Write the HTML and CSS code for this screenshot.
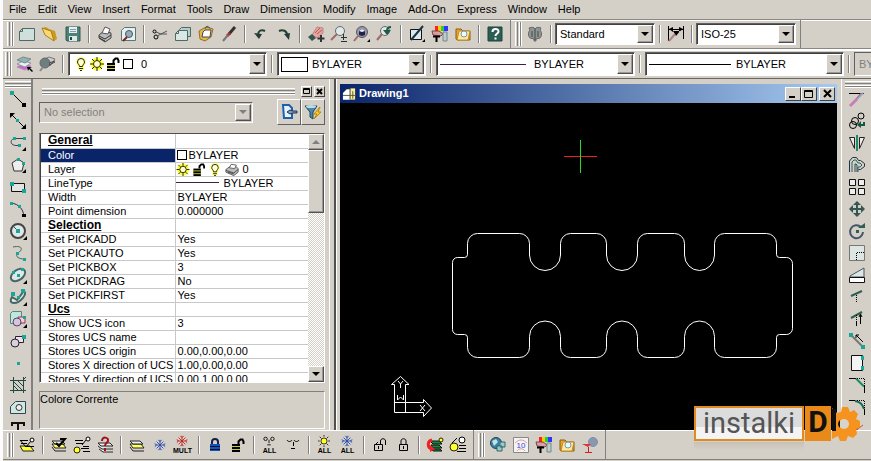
FILE: index.html
```html
<!DOCTYPE html>
<html lang="en">
<head>
<meta charset="utf-8">
<title>Drawing1</title>
<link rel="stylesheet" href="styles.css">
</head>
<body>
<svg class="defs" aria-hidden="true">
  <symbol id="bulb" viewBox="0 0 14 14"><path d="M7 0a5 5 0 0 0-5 5c0 2 2 3 2 5v3h6v-3c0-2 2-3 2-5a5 5 0 0 0-5-5z" fill="#ff6"/><path d="M5.500 9.500c0-2-2-2.500-2-4.500a3.500 3.500 0 0 1 7 0c0 2-2 2.500-2 4.500zM5 11.500h4M6 13.500h2" fill="#ffc" stroke="#222"/></symbol>
  <symbol id="sun" viewBox="0 0 14 14"><circle cx="7" cy="7" r="6.500" fill="#ff3"/><circle cx="7" cy="7" r="3.500" fill="#ffc" stroke="#220"/><path d="M7 0v3M7 11v3M0 7h3M11 7h3M2 2l2 2M10 10l2 2M2 12l2-2M10 4l2-2" stroke="#220"/></symbol>
  <symbol id="unlock" viewBox="0 0 14 14"><path d="M1 6h8v8H1z" fill="#000"/><path d="M1 8.500h8M1 11.500h8" stroke="#cc3"/><path d="M7.500 6V3.500l2-2h2l1 2V6" fill="none" stroke="#000" stroke-width="2"/></symbol>
  <symbol id="printer" viewBox="0 0 16 14"><path d="M1 7l4-3h8l2 2v4l-5 4-9-4z" fill="#bbb" stroke="#555"/><path d="M5 5l2-4 6 1-2 4z" fill="#fff" stroke="#555"/><path d="M1 8l9 3 5-4M3 10l7 2" fill="none" stroke="#444"/></symbol>
  <symbol id="sheets" viewBox="0 0 18 18"><path d="M2 8h11l3 4H5z" fill="#ff6" stroke="#222"/><path d="M2 5h10l3 3H5z" fill="#eee" stroke="#222"/><path d="M2 11l3 4h11" fill="none" stroke="#222"/></symbol>
  <symbol id="flake" viewBox="0 0 14 14"><path d="M7 1v12M1 7h12M3 3l8 8M11 3l-8 8M5 1l2 2 2-2M5 13l2-2 2 2M1 5l2 2-2 2M13 5l-2 2 2 2" fill="none" stroke="currentColor"/></symbol>
  <symbol id="folder" viewBox="0 0 18 18"><path d="M2 14V4h5l2 2h7v9H3z" fill="#e9a52c" stroke="#8a5a10"/><path d="M5 6h11l-2 9H3z" fill="#ffe9a0" stroke="#c58a20"/><circle cx="10" cy="9" r="3" fill="#e8fbff" stroke="#79a"/></symbol>
  <symbol id="palette" viewBox="0 0 18 18"><path d="M4 1h3v5H4z" fill="#f22"/><path d="M7 1h3v5H7z" fill="#fc0"/><path d="M10 1h3v5h-3z" fill="#2c4"/><path d="M13 1h4v5h-4z" fill="#33f"/><path d="M1 6h7l4 3-2 2-8-1z" fill="#d9a0a0" stroke="#744"/><path d="M12 7h4v9h-4z" fill="#bcc" stroke="#788"/><path d="M2 11.500h7M5.500 11v6" stroke="#000" stroke-width="2"/></symbol>
</svg>

<nav class="menu">
  <a href="#">File</a><a href="#">Edit</a><a href="#">View</a><a href="#">Insert</a><a href="#">Format</a><a href="#">Tools</a><a href="#">Draw</a><a href="#">Dimension</a><a href="#">Modify</a><a href="#">Image</a><a href="#">Add-On</a><a href="#">Express</a><a href="#">Window</a><a href="#">Help</a>
</nav>

<div class="bar bar-std">
  <div class="group">
    <span class="grip"></span>
    <button aria-label="New"><svg viewBox="0 0 18 18"><path d="M1.500 15.500V6.500l3-3h12v12z" fill="#cfe0dc" stroke="#4b6b66"/><path d="M1.500 6.500h3v-3" fill="none" stroke="#4b6b66"/></svg></button>
    <button aria-label="Open"><svg viewBox="0 0 18 18"><path d="M1 3l4-1 3 2 6 2 2 8-3 2z" fill="#c99a20"/><path d="M1 3l9 3 3 10-9-6z" fill="#f7d873" stroke="#a8811c"/></svg></button>
    <button aria-label="Save"><svg viewBox="0 0 18 18"><path d="M2 2h14v14H3l-1-1z" fill="#4d8076" stroke="#2e5b52"/><path d="M5 2h8v6H5z" fill="#e6f0ee"/><path d="M6 4.500h6M6 6.500h6" stroke="#89a"/><path d="M5 11h8v5H5z" fill="#dfe8e6"/><path d="M6 12h2v3H6z" fill="#245"/></svg></button>
    <span class="sep"></span>
    <button aria-label="Print"><svg viewBox="0 0 18 18"><path d="M3 10l5-4 7 2v5l-6 4-6-4z" fill="#bbb" stroke="#444"/><path d="M6 8l3-6 5 2-2 5z" fill="#fff" stroke="#555"/><path d="M3 11l6 3 6-4M3 13l6 3" fill="none" stroke="#333"/></svg></button>
    <button aria-label="Print preview"><svg viewBox="0 0 18 18"><path d="M2.500 15.500V5.500l3-3h11v13z" fill="#e6f0ee" stroke="#577"/><circle cx="10" cy="9" r="3.500" fill="#9ab" stroke="#456"/><path d="M8 12l-4 4" stroke="#722" stroke-width="2"/></svg></button>
    <span class="sep"></span>
    <button aria-label="Cut"><svg viewBox="0 0 18 18"><circle cx="3.500" cy="6.500" r="1.500" class="k"/><circle cx="5" cy="12" r="2" class="k"/><path d="M5 7l5 2h6M6 11l4-2 6-3" fill="none" stroke="#555"/></svg></button>
    <button aria-label="Copy"><svg viewBox="0 0 18 18"><path d="M5.500 11.500V4.500l2-2h9v9z" fill="#b8ccc8" stroke="#4b6b66"/><path d="M1.500 15.500V8.500l3-3h9v10z" fill="#d9e8e4" stroke="#4b6b66"/><path d="M1.500 8.500h3v-3" fill="none" stroke="#4b6b66"/></svg></button>
    <button aria-label="Paste"><svg viewBox="0 0 18 18"><path d="M2 6l7-4 7 2-2 8-6 4-5-2z" fill="#e3b94e" stroke="#93711f"/><path d="M6 7l2-2h6l-1 7H5z" fill="#fff" stroke="#445"/><path d="M8 4l2-3 3 2" fill="none" stroke="#555"/></svg></button>
    <button aria-label="Match properties"><svg viewBox="0 0 18 18"><path d="M15 2l-6 7" stroke="#333" stroke-width="3"/><path d="M10 8l-3 3" stroke="#a33" stroke-width="3"/><path d="M8 10l-5 6" stroke="#777" stroke-width="2"/></svg></button>
    <span class="sep"></span>
    <button aria-label="Undo"><svg viewBox="0 0 18 18"><path d="M13 6c-4-2-7 0-7 4" fill="none" stroke="#243d38" stroke-width="2"/><path d="M2 8l8 1-3 5z" fill="#243d38"/></svg></button>
    <button aria-label="Redo"><svg viewBox="0 0 18 18"><path d="M4 6c4-2 8 0 8 4" fill="none" stroke="#243d38" stroke-width="2"/><path d="M9 9l6-1-1 7z" fill="#243d38"/></svg></button>
    <span class="sep"></span>
    <button aria-label="Pan"><svg viewBox="0 0 18 18"><path d="M5 10l5-8 6 1v5l-6 5z" fill="#e9a4a0" stroke="#c08480"/><path d="M8 8l5-5M10 9l5-4" stroke="#a8605c"/><path d="M1 12l4-3 4 4-4 3z" fill="#35574f"/><path d="M14 10v7M10.500 13.500h7" stroke="#333" stroke-width="2"/></svg></button>
    <button aria-label="Zoom realtime"><svg viewBox="0 0 18 18"><circle cx="10" cy="6" r="4.500" fill="#dfe9e6" stroke="#667"/><path d="M7 9l-6 6" stroke="#a0696a" stroke-width="2"/><path d="M13.500 9v6M11 12.500h6M11 16.500h6" stroke="#233"/></svg></button>
    <button aria-label="Zoom window"><svg viewBox="0 0 18 18"><circle cx="9" cy="7" r="5.500" fill="#99a" stroke="#556"/><path d="M6 6l3-2 3 2v4l-3 1-3-1z" fill="#224"/><path d="M6 6l3-2 3 2-3 1z" fill="#eef"/><path d="M5 11l-4 5" stroke="#a0696a" stroke-width="2"/><path d="M17 14v3h-3z"/></svg></button>
    <button aria-label="Zoom previous"><svg viewBox="0 0 18 18"><circle cx="9" cy="6" r="4.500" fill="#dfe9e6" stroke="#667"/><path d="M6 9l-5 6" stroke="#a0696a" stroke-width="2"/><path d="M15 2c-3 0-4 2-4 4" fill="none" stroke="#1e5a48" stroke-width="2"/><path d="M7 5h8l-4 5z" fill="#1e5a48"/></svg></button>
    <span class="sep"></span>
    <button aria-label="Redraw"><svg viewBox="0 0 18 18"><path d="M2.500 4.500h11v10h-11z" fill="#dce8ee" stroke="#111"/><path d="M15 1L3 15" stroke="#16353e" stroke-width="2"/><path d="M17 14v3h-3z"/></svg></button>
    <button aria-label="Properties"><svg><use href="#palette"/></svg></button>
    <button aria-label="Explorer"><svg><use href="#folder"/></svg></button>
    <span class="sep"></span>
    <button aria-label="Help"><svg viewBox="0 0 18 18"><path d="M2 2h14v14H2z" fill="#2d5e53" stroke="#17443a"/><path d="M6.500 7c0-4 6-4 6-.5 0 2-3 2-3 4.500M9.500 12.500v2" fill="none" stroke="#fff" stroke-width="2"/></svg></button>
  </div>
  <div class="group">
    <span class="grip"></span>
    <button aria-label="Text style"><svg viewBox="0 0 18 18"><path d="M3 3c3-1 5-1 6 1 1-2 4-2 6-1l-1 2c2 2 2 6 0 8l-4 1v2H8v-2l-4-1c-2-2-2-6 0-8z" fill="#8d9694" stroke="#666"/><path d="M6 6v6M9 4v11M12 6v6" stroke="#444"/></svg></button>
    <span class="sep"></span>
    <label class="combo w100"><select aria-label="Text style"><option>Standard</option></select><i class="arrow"></i></label>
    <span class="sep"></span>
    <button aria-label="Dimension style"><svg viewBox="0 0 18 18"><path d="M1.500 1v15M16.500 1v13M2 4.500h14" class="k"/><path d="M2 4l4-2v5zM16 4l-4-2v5zM6 6h7l-4 5z"/><path d="M8 9l-6 7" stroke="#b08080" stroke-width="2"/></svg></button>
    <span class="sep"></span>
    <label class="combo w100"><select aria-label="Dimension style"><option>ISO-25</option></select><i class="arrow"></i></label>
  </div>
</div>

<div class="bar bar-obj">
  <span class="grip"></span>
  <button aria-label="Layer manager"><svg viewBox="0 0 18 18"><path d="M2 12l6-3 8 2-6 4z" fill="#c86ac0" stroke="#c080c0"/><path d="M2 9l6-3 8 2-6 4z" fill="#eee" stroke="#89a"/><path d="M2 5l6-3 8 2-6 4z" fill="#8fb5aa" stroke="#789"/><path d="M12 12h5l-2 1 3 3-1 1-3-3-1 2z"/></svg></button>
  <button aria-label="Layer states"><svg viewBox="0 0 18 18"><path d="M5 5l6-3 6 2-5 7z" fill="#ccc" stroke="#777"/><circle cx="7" cy="8" r="5" fill="#6f7f7c" stroke="#667"/><path d="M11 8l6-2M11 10l6-3" stroke="#444"/><path d="M5 12l-3 4" stroke="#888" stroke-width="2"/></svg></button>
  <span class="sep"></span>
  <label class="combo w200"><svg class="m"><use href="#bulb"/></svg><svg class="m"><use href="#sun"/></svg><svg class="m"><use href="#unlock"/></svg><i class="swatch"></i><select aria-label="Layer"><option>0</option></select><i class="arrow"></i></label>
  <span class="sep"></span>
  <label class="combo w150"><i class="swatch wide"></i><select aria-label="Color"><option>BYLAYER</option></select><i class="arrow"></i></label>
  <span class="sep"></span>
  <label class="combo w200"><i class="line"></i><select aria-label="Linetype"><option>BYLAYER</option></select><i class="arrow"></i></label>
  <span class="sep"></span>
  <label class="combo w200"><i class="line black"></i><select aria-label="Lineweight"><option>BYLAYER</option></select><i class="arrow"></i></label>
  <span class="sep"></span>
  <label class="combo w200 off"><select aria-label="Plot style" disabled><option>BYLAYER</option></select><i class="arrow"></i></label>
</div>

<main class="middle">
  <div class="side left">
    <span class="hgrip"></span>
    <button aria-label="Line"><svg viewBox="0 0 18 18"><path d="M3 3l12 12" class="k"/><path d="M1 1h4v4H1z" class="t"/><path d="M13 13h4v4h-4z"/></svg></button>
    <button aria-label="Ray"><svg viewBox="0 0 18 18"><path d="M3 3l12 12" class="k"/><path d="M1 1h5L1 6zM17 17h-5l5-5z"/><path d="M7 7h3v3H7z" class="t"/></svg></button>
    <button aria-label="Polyline"><svg viewBox="0 0 18 18"><path d="M5 4.500h10M5 4.500c-5 2-3 7 2 7h3" fill="none" stroke="#345"/><path d="M4 3h3v3H4zM14 3h3v3h-3zM9 10h3v3H9z" class="t"/><path d="M17 13v4h-4z"/></svg></button>
    <button aria-label="Polygon"><svg viewBox="0 0 18 18"><path d="M9 3l6 4-2 8H5L3 7z" fill="#eee" stroke="#333"/><path d="M8 2h3v3H8zM13 6h3v3h-3z" class="t"/><path d="M17 13v4h-4z"/></svg></button>
    <button aria-label="Rectangle"><svg viewBox="0 0 18 18"><path d="M2.500 5.500h13v8h-13z" fill="#e4e4e4" stroke="#111"/><path d="M1 4h4v4H1zM13 11h4v4h-4z" class="t"/></svg></button>
    <button aria-label="Arc"><svg viewBox="0 0 18 18"><path d="M2 3c8 1 12 6 13 13" fill="none" stroke="#234"/><path d="M1 2h3v3H1zM9 5h3v3H9z" class="t"/><path d="M13 14h4v3h-4z"/></svg></button>
    <button aria-label="Circle"><svg viewBox="0 0 18 18"><circle cx="9" cy="9" r="7" fill="#dfe8e6" stroke="#444" stroke-width="2"/><path d="M4 4l5 5" stroke="#166"/><path d="M7 7h4v4H7z" class="t"/><path d="M18 14v4h-4z"/></svg></button>
    <button aria-label="Spline"><svg viewBox="0 0 18 18"><path d="M4 3c10-2 10 3 5 6-4 4 2 6 6 6" fill="none" stroke="#465"/><path d="M7 8h3v3H7zM14 14h3v3h-3z" class="t"/></svg></button>
    <button aria-label="Ellipse"><svg viewBox="0 0 18 18"><ellipse cx="9" cy="9" rx="8" ry="5" transform="rotate(-35 9 9)" fill="#dfe8e6" stroke="#466" stroke-width="2"/><path d="M3 5h3v3H3zM8 8h3v3H8zM12 2h3v3h-3z" class="t"/><path d="M18 14v4h-4z"/></svg></button>
    <button aria-label="Ellipse arc"><svg viewBox="0 0 18 18"><path d="M15 3c4 3-4 12-10 12-4 0-4-3-2-6l5 3z" fill="#dfe8e6" stroke="#466" stroke-width="2"/><path d="M2 4h4v4H2zM12 1h4v4h-4zM8 8h3v3H8z" class="t"/><path d="M18 14v4h-4z"/></svg></button>
    <button aria-label="Insert block"><svg viewBox="0 0 18 18"><path d="M1.500 13.500V3.500l2-2h9v12z" fill="#bfe6dc" stroke="#587"/><path d="M9 7h7v6H9z" fill="#f3cfd8" stroke="#935"/><circle cx="8" cy="12" r="4" fill="#d9c3d8" stroke="#547"/><path d="M14 6h3v3h-3z" class="t"/><path d="M18 14v4h-4z"/></svg></button>
    <button aria-label="Make block"><svg viewBox="0 0 18 18"><path d="M6.500 4.500h8v6h-8z" fill="#f3dfe8" stroke="#223"/><circle cx="6" cy="11" r="4" fill="#d9d0d8" stroke="#223"/><path d="M13 3h4v4h-4z" class="t"/></svg></button>
    <button aria-label="Point"><svg viewBox="0 0 18 18"><path d="M8 8h3v3H8z" class="t"/></svg></button>
    <button aria-label="Hatch"><svg viewBox="0 0 18 18"><path d="M4.500 1v16M14.500 1v16M1 4.500h16M1 14.500h16M4 9l5 5M4 5l9 9M8 4l6 6M17 1l-3 3" fill="none" stroke="#20493f"/></svg></button>
    <button aria-label="Region"><svg viewBox="0 0 18 18"><path d="M1.500 15.500V8.500l5-5h10v12z" fill="#cfe8e0" stroke="#345"/><circle cx="10" cy="9.500" r="3" fill="#eee" stroke="#333"/></svg></button>
    <button aria-label="Text"><svg viewBox="0 0 18 18"><path d="M3 6V3h12v3M9 3v12M6 16h6" fill="none" stroke="#111" stroke-width="2"/></svg></button>
  </div>

  <section class="panel">
    <header class="panel-head"><span class="hgrip"></span><button class="tiny" aria-label="Dock"><svg viewBox="0 0 9 9"><path d="M1.500 1.500h6v5h-6zM1 2.500h7" class="k"/></svg></button><button class="tiny" aria-label="Close panel"><svg viewBox="0 0 9 9"><path d="M2 2l5 5M7 2L2 7" class="k" stroke-width="2"/></svg></button></header>
    <div class="panel-tools">
      <label class="combo off"><select aria-label="Selection" disabled><option>No selection</option></select><i class="arrow"></i></label>
      <span class="pair"><button class="raised" aria-label="Select objects"><svg viewBox="0 0 18 18"><path d="M3 2h6l3 3v10H4z" fill="#e8f2ff" stroke="#1e5fae" stroke-width="2"/><path d="M17 8h-4l-3-1-3 2 3 2 3-1h4z" fill="#6b9cd8" stroke="#234"/></svg></button><button class="raised" aria-label="Quick select"><svg viewBox="0 0 18 18"><path d="M1 3h12L9 9v7l-3-2V9z" fill="#4f86a8" stroke="#245"/><ellipse cx="7" cy="3.500" rx="5" ry="1.500" fill="#bde"/><path d="M16 4l-6 7h3l-3 5 7-7h-3z" fill="#fc2" stroke="#b80"/></svg></button></span>
    </div>
    <div class="props">
      <div class="rows">
        <table>
          <tr><th>General</th><td></td></tr>
          <tr class="sel"><td>Color</td><td><i class="swatch small"></i>BYLAYER</td></tr>
          <tr><td>Layer</td><td><span class="cell"><svg class="m"><use href="#sun"/></svg><svg class="m"><use href="#unlock"/></svg><svg class="m"><use href="#bulb"/></svg><svg class="m"><use href="#printer"/></svg>0</span></td></tr>
          <tr><td>LineType</td><td><i class="line short"></i>BYLAYER</td></tr>
          <tr><td>Width</td><td>BYLAYER</td></tr>
          <tr><td>Point dimension</td><td>0.000000</td></tr>
          <tr><th>Selection</th><td></td></tr>
          <tr><td>Set PICKADD</td><td>Yes</td></tr>
          <tr><td>Set PICKAUTO</td><td>Yes</td></tr>
          <tr><td>Set PICKBOX</td><td>3</td></tr>
          <tr><td>Set PICKDRAG</td><td>No</td></tr>
          <tr><td>Set PICKFIRST</td><td>Yes</td></tr>
          <tr><th>Ucs</th><td></td></tr>
          <tr><td>Show UCS icon</td><td>3</td></tr>
          <tr><td>Stores UCS name</td><td></td></tr>
          <tr><td>Stores UCS origin</td><td>0.00,0.00,0.00</td></tr>
          <tr><td>Stores X direction of UCS</td><td>1.00,0.00,0.00</td></tr>
          <tr><td>Stores Y direction of UCS</td><td>0.00,1.00,0.00</td></tr>
        </table>
      </div>
      <div class="scroll"><button class="arrow up" aria-label="Scroll up"></button><span class="thumb"></span><button class="arrow" aria-label="Scroll down"></button></div>
    </div>
    <footer class="status">Colore Corrente</footer>
  </section>

  <section class="window">
    <header class="title">
      <svg viewBox="0 0 16 14"><path d="M1 13V6l4-4h4v11z" fill="#fff"/><path d="M9 1h5v12H9z" fill="#ffef8a"/><path d="M1 8.500h14M8.500 1v12M11.500 4v8" stroke="#554"/></svg>
      <h1>Drawing1</h1>
      <button class="tiny" aria-label="Minimize"><svg viewBox="0 0 12 10"><path d="M2 8h6" class="k" stroke-width="2"/></svg></button><button class="tiny" aria-label="Maximize"><svg viewBox="0 0 12 10"><path d="M1.500 1.500h8v7h-8zM1 2.500h9" class="k"/></svg></button><button class="tiny last" aria-label="Close"><svg viewBox="0 0 12 10"><path d="M3 1l7 7M10 1L3 8" class="k" stroke-width="2"/></svg></button>
    </header>
    <svg class="canvas" viewBox="340 103 497 327" preserveAspectRatio="xMinYMin slice">
      <g fill="none" stroke="#fff">
        <path d="M452.500 262.500a5 5 0 0 1 5-5h7a3 3 0 0 0 3-3V243.500a10 10 0 0 1 10-10H519.500a10 10 0 0 1 10 10V255a15.500 15.500 0 0 0 31 0V243.500a10 10 0 0 1 10-10H596.500a10 10 0 0 1 10 10V255a15.500 15.500 0 0 0 31 0V243.500a10 10 0 0 1 10-10H674.500a10 10 0 0 1 10 10V255a15 15.500 0 0 0 30 0V243.500a10 10 0 0 1 10-10H766.500a10 10 0 0 1 10 10V254.500a3 3 0 0 0 3 3h7a6 6 0 0 1 6 6V328.500a6 6 0 0 1-6 6h-7a3 3 0 0 0-3 3V347.500a10 10 0 0 1-10 10H724.500a10 10 0 0 1-10-10V336.500a15 15.500 0 0 0-30 0V347.500a10 10 0 0 1-10 10H647.500a10 10 0 0 1-10-10V336.500a15.500 15.500 0 0 0-31 0V347.500a10 10 0 0 1-10 10H570.500a10 10 0 0 1-10-10V336.500a15.500 15.500 0 0 0-31 0V347.500a10 10 0 0 1-10 10H477.500a10 10 0 0 1-10-10V337.500a3 3 0 0 0-3-3h-7a5 5 0 0 1-5-5z"/>
        <path d="M394.500 412.500V384.500H391.500L400.500 376.500L409 384.500H405.500V402.500H423.500V399.500L431.500 408L423.500 416.500V412.500zM394.500 402.500H405.500V412.500"/>
        <path d="M398 381l2.500 3 2.500-3M400.500 384v4M397.500 395v5l3-3 3 3v-5M420 405l5 6M425 405l-5 6"/>
      </g>
      <path d="M564 156.500h33" stroke="#f02020"/><path d="M580.500 140v33" stroke="#20e020"/>
    </svg>
  </section>

  <div class="side right">
    <span class="hgrip"></span>
    <button aria-label="Erase"><svg viewBox="0 0 18 18"><path d="M1 3.500h15" class="k"/><path d="M15 3l-6 6" stroke="#8ac" stroke-width="2"/><path d="M13 3l-5 6" stroke="#c44"/><path d="M9 9l-7 7" stroke="#c77fb5" stroke-width="3"/></svg></button>
    <button aria-label="Copy object"><svg viewBox="0 0 18 18"><circle cx="13" cy="4" r="3" class="k"/><circle cx="5" cy="13" r="3.500" class="k"/><circle cx="7" cy="9" r="3.500" class="k"/><path d="M16 10v3h-3" fill="none" stroke="#15573c" stroke-width="2"/><path d="M13 9v7l-4-3z" fill="#15573c"/></svg></button>
    <button aria-label="Mirror"><svg viewBox="0 0 18 18"><path d="M1.500 3.500l5 11v-11zM16.500 3.500l-5 11v-11z" fill="#eee" stroke="#222"/><path d="M9 1v16" stroke="#1f8a68" stroke-width="2"/></svg></button>
    <button aria-label="Offset"><svg viewBox="0 0 18 18"><path d="M1.500 16V5l3-3.500h4l2 3h2l4 3v3l-4 3h-2" fill="none" stroke="#234"/><path d="M4 16V6l2-2h2l2 3h2l2 2-2 2h-2v5" fill="none" stroke="#1f6a58"/><path d="M7 16V8h1l1 1v7" fill="none" stroke="#345"/></svg></button>
    <button aria-label="Array"><svg viewBox="0 0 18 18"><path d="M1.500 1.500h6v6h-6zM10.500 1.500h6v6h-6zM1.500 10.500h6v6h-6zM10.500 10.500h6v6h-6z" fill="#eee" stroke="#111"/></svg></button>
    <button aria-label="Move"><svg viewBox="0 0 18 18"><path d="M9 3v12M3 9h12" stroke="#35574f" stroke-width="2"/><path d="M9 1l4 4H5zM9 17l4-4H5zM1 9l4-4v8zM17 9l-4-4v8z" fill="#35574f"/></svg></button>
    <button aria-label="Rotate"><svg viewBox="0 0 18 18"><path d="M13 5a6.500 6.500 0 1 0 2 5" fill="none" stroke="#456" stroke-width="2"/><path d="M10 6h7V1z" fill="#2c6050"/><path d="M8 8h3v3H8z" fill="#2c6050"/></svg></button>
    <button aria-label="Scale"><svg viewBox="0 0 18 18"><path d="M1.500 1.500h15v15h-15z" fill="#dde6e3" stroke="#777"/><path d="M8.500 16V8.500h8" class="d"/></svg></button>
    <button aria-label="Stretch"><svg viewBox="0 0 18 18"><path d="M2 10l14-8v9H2z" fill="#dde6e3" stroke="#456"/><path d="M1.500 11.500h15v5h-15z" fill="#fff" stroke="#111"/></svg></button>
    <button aria-label="Trim"><svg viewBox="0 0 18 18"><path d="M3 8l11-5" stroke="#2c6050" stroke-width="2"/><path d="M8.500 7v8" class="d"/></svg></button>
    <button aria-label="Extend"><svg viewBox="0 0 18 18"><path d="M3 8l11-6" stroke="#2c6050" stroke-width="2"/><path d="M8.500 5v6" class="d"/><path d="M8.500 11v5M12.500 5v9M11 7l1.500-3L14 7" class="k"/></svg></button>
    <button aria-label="Break"><svg viewBox="0 0 18 18"><path d="M3 3l12 12" stroke="#777" stroke-width="2"/><path d="M8 3l7 7M8 3v3M8 3h3" class="k"/><path d="M1 1h4v4H1zM13 13h4v4h-4z" class="t"/></svg></button>
    <button aria-label="Break at point"><svg viewBox="0 0 18 18"><path d="M3.500 1.500h11v15h-11z" fill="#f3f3f3" stroke="#111"/><path d="M13 2h3v4h-3zM13 12h3v4h-3z" class="t"/></svg></button>
    <button aria-label="Chamfer"><svg viewBox="0 0 18 18"><path d="M1 2.500h7M16.500 10v7" class="k"/><path d="M8 2.500l8 8" stroke="#1a8a60" stroke-width="2"/><path d="M9 2.500h7.500V11" class="d"/></svg></button>
    <button aria-label="Fillet"><svg viewBox="0 0 18 18"><path d="M1 2.500h6M16.500 11v6" class="k"/><path d="M7 3c6 1 8 4 9 8" fill="none" stroke="#1a6a50" stroke-width="2"/><path d="M9 2.500h7.500V11" class="d"/></svg></button>
    <button aria-label="Explode"><svg viewBox="0 0 18 18"><path d="M3 14l12-9M5 5l9 10M9 2v14" stroke="#c52"/></svg></button>
  </div>
</main>

<div class="bar bar-layers">
  <div class="group">
    <span class="grip"></span>
    <button aria-label="Make layer current"><svg viewBox="0 0 18 18"><path d="M2 10h10l4 5H5z" fill="#ff3" stroke="#222"/><path d="M2 4.500h8M3 7.500h6M2 4l6 7 5-6M9 10.500h7" class="k"/><circle cx="14" cy="4" r="2" fill="#fff" stroke="#000"/></svg></button>
    <span class="sep"></span>
    <button aria-label="Layer previous"><svg viewBox="0 0 18 18"><use href="#sheets"/><path d="M6 7l3 3 6-7h-5" fill="none" stroke="#000" stroke-width="2"/></svg></button>
    <button aria-label="Layer match"><svg viewBox="0 0 18 18"><path d="M2 4.500h8M3 7.500h7M9 9l4-5M8 12.500h8M10 15.500h7M10 10.500h6" class="k"/><circle cx="15" cy="3" r="2" fill="#fff" stroke="#000"/><circle cx="4" cy="14" r="3" fill="#ff3" stroke="#220"/></svg></button>
    <button aria-label="Layer query"><svg viewBox="0 0 18 18"><path d="M2 7h12l3 3H5zM2 10l4 3h11M3 13l4 3h10" fill="#eee" stroke="#222"/><path d="M6 5c0-5 7-4 6 0-1 2-3 2-3 5M9 12v3" fill="none" stroke="#a01020" stroke-width="2"/></svg></button>
    <span class="sep"></span>
    <button aria-label="Isolate"><svg><use href="#sheets"/></svg></button>
    <button aria-label="Freeze" class="blue"><svg class="s"><use href="#flake"/></svg></button>
    <button aria-label="Freeze multiple" class="red"><span class="cap"><svg><use href="#flake"/></svg><b>MULT</b></span></button>
    <span class="sep"></span>
    <button aria-label="Lock"><svg viewBox="0 0 18 18"><path d="M6 8V6c0-4 6-4 6 0v2" fill="none" stroke="#124" stroke-width="2"/><path d="M4 8h10v7H4z" fill="#15b"/><path d="M4 10.500h10M4 13.500h10" stroke="#013"/></svg></button>
    <button aria-label="Unlock"><svg class="m"><use href="#unlock"/></svg></button>
    <span class="sep"></span>
    <button aria-label="All layers on"><span class="cap"><svg viewBox="0 0 14 11"><circle cx="3" cy="3" r="2" class="k"/><circle cx="11" cy="3" r="2" class="k"/><path d="M7 4v4M5 10h4" class="k"/></svg><b>ALL</b></span></button>
    <button aria-label="Layer off"><svg viewBox="0 0 18 18"><path d="M3 4c1 2 4 2 5 0M10 4c1 2 4 2 5 0M9.500 6v4M7 12.500h4" class="k"/></svg></button>
    <span class="sep"></span>
    <button aria-label="Thaw all"><span class="cap"><svg viewBox="0 0 14 14"><circle cx="7" cy="7" r="3.500" fill="#ff3" stroke="#220"/><path d="M7 0v2M7 12v2M0 7h2M12 7h2M2 2l2 2M10 10l2 2M2 12l2-2M10 4l2-2" stroke="#220"/></svg><b>ALL</b></span></button>
    <button aria-label="Freeze all" class="blue"><span class="cap"><svg><use href="#flake"/></svg><b>ALL</b></span></button>
    <span class="sep"></span>
    <button aria-label="Unlock object"><svg viewBox="0 0 18 18"><path d="M3.500 8.500h8v6h-8zM7.500 10v3M9.500 8V5c0-3 5-3 5 0v4M5 8l2-2" class="k"/></svg></button>
    <button aria-label="Lock object"><svg viewBox="0 0 18 18"><path d="M5.500 8.500h8v6h-8zM9.500 10v3M7 8V5c0-3 5-3 5 0v3" class="k"/></svg></button>
    <span class="sep"></span>
    <button aria-label="Merge layers"><svg viewBox="0 0 18 18"><path d="M4 5h9l3 3H7zM5 9h8l3 3H7zM5 13h9l2 2H7z" fill="#168a40" stroke="#111"/><path d="M6 4c-5 1-5 8 0 9" fill="none" stroke="#e22" stroke-width="3"/><path d="M4 9l5 4-5 3z" fill="#e22"/><circle cx="15" cy="4" r="2" fill="#ff3" stroke="#220"/></svg></button>
    <button aria-label="Change layer"><svg viewBox="0 0 18 18"><circle cx="13" cy="4" r="3" fill="#fff" stroke="#000"/><circle cx="5" cy="11" r="4" fill="#ff3" stroke="#220"/><path d="M8 2L3 7M10 9.500h7M10 12.500h7M8 15.500h9" class="k"/></svg></button>
  </div>
  <div class="group">
    <span class="grip"></span>
    <button aria-label="Web"><svg viewBox="0 0 18 18"><circle cx="7" cy="7" r="5.500" fill="#3a7fa5" stroke="#245"/><path d="M3 5l4-2 2 3-4 4z" fill="#bfe6dc"/><path d="M12 6h4v5h-5M8 10h5v5H8z" fill="#9cc" stroke="#366"/></svg></button>
    <button aria-label="Speed"><svg viewBox="0 0 18 18"><path d="M1.500 1.500h15v15h-15z" fill="#f3f3fa" stroke="#888"/><path d="M3 7c4-4 8-4 12 0M5 15c2-3 6-3 8 0" fill="none" stroke="#e0a080"/><text x="9" y="12" text-anchor="middle" class="ten">10</text></svg></button>
    <button aria-label="Palette"><svg><use href="#palette"/></svg></button>
    <button aria-label="Browse"><svg><use href="#folder"/></svg></button>
    <button aria-label="Satellite"><svg viewBox="0 0 18 18"><circle cx="12" cy="6" r="4.500" fill="#89a" stroke="#88b"/><path d="M1 8h9l-3 3z" fill="#d33"/><path d="M4 16.500h7M7.500 11v5" stroke="#c22"/></svg></button>
  </div>
</div>

<div class="mark">
  <span class="word">instalki</span>
  <span class="block">D</span>
  <svg viewBox="0 0 30 36"><path d="M1 2l5 5 4-1 1-5h6l2 5 4-2 4 4-2 5 4 2v6l-4 2 1 5-4 4-5-2-2 5h-6l-2-5-6 3z" fill="#f6921e"/><path d="M1 3h4v22H1z" fill="#111"/><circle cx="13" cy="18" r="5" fill="#d8d4cc"/><path d="M9 14a5 5 0 0 0 0 8z" fill="#111"/></svg>
  <span class="mirror" aria-hidden="true"></span>
</div>
</body>
</html>
```

FILE: styles.css
```css
* { box-sizing: border-box; }
html, body { height: 100%; }
body {
  margin: 0;
  position: relative;
  display: flex;
  flex-direction: column;
  overflow: hidden;
  border-left: 3px solid #fcfcfc;
  background: #d4d0c8;
  color: #000;
  font: 11px/13px "Liberation Sans", Arial, sans-serif;
}
.defs { display: none; }
.k { fill: none; stroke: #000; }
.t { fill: #1aa596; }
.d { fill: none; stroke: #000; stroke-dasharray: 1 1; }
button {
  flex: none;
  display: flex;
  align-items: center;
  justify-content: center;
  width: 23px;
  height: 22px;
  padding: 0;
  border: 0;
  background: none;
  font: inherit;
}
svg { flex: none; width: 18px; height: 18px; }
svg.m { width: 14px; height: 14px; }
svg.s { width: 12px; height: 12px; }

.menu { flex: none; display: flex; gap: 11px; height: 19px; padding: 3px 6px 0; }
.menu a { color: #000; text-decoration: none; }

.bar { flex: none; display: flex; align-items: center; overflow: hidden; border-top: 1px solid #8a8883; box-shadow: inset 0 1px #fff; }
.bar-std { height: 30px; border-bottom: 1px solid #8a8883; }
.bar-obj { height: 29px; border-top-color: #fff; }
.bar-layers { height: 30px; margin-bottom: 1px; border-top: 0; border-bottom: 1px solid #808080; }
.bar > * { flex: none; }
.group { display: flex; align-items: center; align-self: stretch; padding-right: 4px; border-right: 1px solid #808080; }
.grip { flex: none; width: 7px; height: 24px; margin: 0 1px 0 4px; border: solid #fff; border-width: 0 1px; background: linear-gradient(90deg, #d4d0c8 1px, #808080 1px 2px, #d4d0c8 2px 3px, #fff 3px 4px, #808080 4px); }
.bar-obj .grip { margin: 0 0 0 2px; }
.sep { flex: none; width: 2px; height: 18px; margin: 0 3px 0 4px; border-left: 1px solid #808080; background: #fff; }
.bar-obj .sep { margin: 0 4px; }

.combo { display: flex; align-items: center; gap: 2px; height: 22px; border: 1px solid; border-color: #606060 #fff #fff #606060; box-shadow: inset 1px 1px #404040; background: #fff; padding: 1px 1px 1px 2px; }
.bar-obj .combo { height: 24px; }
.bar-obj .combo svg:first-child { margin-left: 3px; }
.w100 { width: 100px; }
.w150 { width: 149px; }
.w200 { width: 199px; }
.combo select { flex: 1; min-width: 0; align-self: stretch; appearance: none; border: 0; background: none; color: #000; font: inherit; padding: 0 2px; outline: 0; }
.combo.off { background: #d4d0c8; box-shadow: none; }
.combo.off select { color: #808080; opacity: 1; }
.arrow { flex: none; display: flex; align-items: center; justify-content: center; width: 16px; height: 18px; border: 1px solid; border-color: #fff #505050 #505050 #fff; box-shadow: inset -1px -1px #999; background: #d4d0c8; pointer-events: none; }
.bar-obj .arrow { height: 20px; }
.arrow::after { content: ""; border: solid transparent; border-width: 4px 4px 0; border-top-color: #000; }
.arrow.up::after { border-width: 0 4px 4px; border-bottom-color: #808080; }
.off .arrow::after { border-top-color: #808080; }
.swatch { flex: none; display: inline-block; width: 10px; height: 10px; border: 1px solid #000; margin: 0 4px 0 1px; background: #fff; }
.swatch.wide { width: 27px; height: 15px; margin: 0 0 0 1px; }
.swatch.small { margin: 0 2px 0 -1px; vertical-align: -1px; }
.line { flex: none; width: 86px; height: 1px; margin: 0 4px 0 1px; background: #402040; }
.line.black { width: 82px; margin-right: 1px; background: #000; }
.line.short { display: inline-block; width: 43px; margin: 0 5px 0 -2px; vertical-align: 4px; }

.middle { flex: 1; min-height: 0; display: flex; border-top: 1px solid #68665f; }
.side { flex: none; display: flex; flex-direction: column; overflow: hidden; }
.side.left { width: 30px; border-right: 2px solid #808080; padding-top: 2px; }
.side.right { width: 30px; border-left: 1px solid #fff; padding-top: 2px; align-items: center; }
.side button { width: 30px; }
.hgrip { flex: none; width: 26px; height: 7px; margin-left: 2px; border: solid #fff; border-width: 1px 0; background: linear-gradient(#d4d0c8 1px, #808080 1px 2px, #d4d0c8 2px 3px, #fff 3px 4px, #808080 4px); }

.panel { flex: none; width: 299px; display: flex; flex-direction: column; padding: 6px 8px 0 5px; margin-left: 1px; box-shadow: inset -3px 0 #d4d0c8, inset -4px 0 #fff; }
.panel-head { display: flex; align-items: center; gap: 2px; height: 12px; }
.panel-head .hgrip { flex: 1; margin: 0 4px 0 3px; }
.tiny { width: 11px; height: 11px; border: 1px solid; border-color: #fff #404040 #404040 #fff; background: #d4d0c8; }
.tiny svg { width: 9px; height: 9px; }
.panel-tools { display: flex; align-items: center; gap: 24px; margin-top: 2px; height: 26px; }
.panel-tools .combo { flex: 1; height: 21px; }
.panel-tools .arrow { height: 17px; }
.pair { display: flex; }
.raised { width: 24px; height: 26px; border: 1px solid; border-color: #fff #606060 #606060 #fff; }
.props { flex: 1; min-height: 0; display: flex; margin-top: 8px; border: 1px solid; border-color: #505050 #fff #fff #808080; box-shadow: inset 1px 0 #404040; padding-left: 1px; background: #fff; }
.rows { flex: 1; overflow: hidden; }
table { width: 100%; border-collapse: collapse; table-layout: fixed; }
th, td { height: 14px; padding: 0 0 0 7px; border-bottom: 1px solid #c8c8c8; line-height: 13px; text-align: left; white-space: nowrap; }
th { text-decoration: underline; font-size: 12px; }
tr > :first-child { width: 134px; border-right: 1px solid #c8c8c8; }
td + td, th + td { padding-left: 2px; }
.sel td:first-child { background: #0a246a; color: #fff; }
.cell { display: flex; align-items: center; gap: 2px; height: 13px; margin-left: -2px; }
.cell svg.m { height: 13px; }
.cell svg:last-of-type { margin: 0 2px 0 1px; }
.scroll { flex: none; width: 16px; display: flex; flex-direction: column; justify-content: space-between; background: repeating-conic-gradient(#d4d0c8 0 25%, #fff 0 50%) 0 0 / 2px 2px; }
.scroll .arrow { height: 16px; }
.thumb { flex: none; height: 63px; margin-bottom: auto; border: 1px solid; border-color: #fff #505050 #505050 #fff; box-shadow: inset -1px -1px #999; background: #d4d0c8; }
.status { flex: none; height: 38px; margin: 8px 0 1px; border: 1px solid; border-color: #808080 #fff #fff #808080; padding-top: 1px; }

.window { flex: 1; min-width: 0; display: flex; flex-direction: column; margin-left: 1px; border-left: 2px solid #505050; box-shadow: inset 1px 0 #fff; padding: 5px 4px 0 4px; }
.title { flex: none; display: flex; align-items: center; height: 19px; padding: 0 2px; background: linear-gradient(90deg, #0a246a, #a6caf0); color: #fff; }
.title > svg { width: 15px; height: 14px; }
.title h1 { flex: 1; margin: 0 0 0 2px; font: bold 11px/13px "Liberation Sans", Arial, sans-serif; }
.title .tiny { width: 16px; height: 14px; }
.title .tiny svg { width: 12px; height: 10px; }
.title .last { margin-left: 2px; }
.canvas { flex: 1; min-height: 0; width: 100%; height: auto; background: #000; }

.cap { display: flex; flex-direction: column; align-items: center; }
.cap svg { width: 12px; height: 12px; }
.cap b { font: bold 7px/7px "Liberation Sans", Arial, sans-serif; color: #000; }
.blue { color: #2548b0; }
.red { color: #c02020; }
.ten { font: 8px "Liberation Sans", Arial, sans-serif; fill: #44c; }

.mark { position: absolute; right: 10px; bottom: 20px; display: flex; align-items: center; height: 35px; }
.word { width: 110px; height: 35px; border: 2px solid #e08a20; background: linear-gradient(#dcdcdc 62%, #f4f4f4 62%); color: #555; font: 29px/31px Roboto, sans-serif; text-align: center; }
.block { width: 26px; height: 35px; margin-left: 1px; background: #e8891a; color: #111; font: bold 30px/32px Roboto, sans-serif; text-align: center; }
.mark svg { width: 30px; height: 36px; }
.mirror { position: absolute; left: 0; top: 36px; width: 110px; height: 8px; background: linear-gradient(#b8b4ac, transparent); opacity: .5; }
```
